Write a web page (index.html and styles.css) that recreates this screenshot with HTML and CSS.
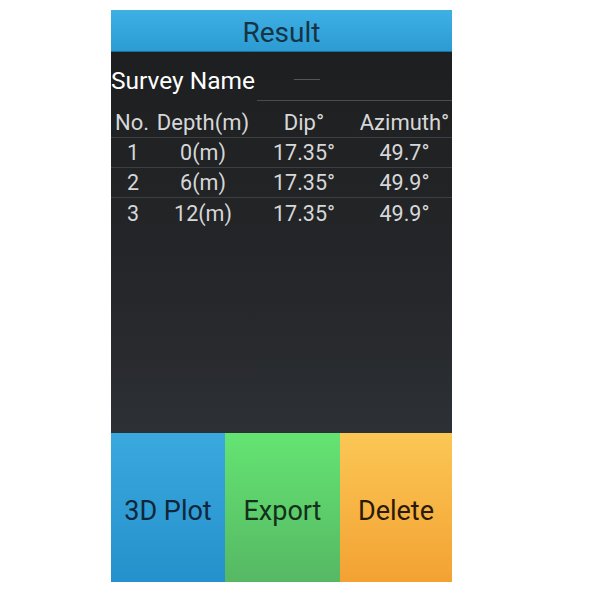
FILE: index.html
```html
<!DOCTYPE html>
<html>
<head>
<meta charset="utf-8">
<link rel="stylesheet" href="styles.css">
</head>
<body>
<div class="page">
  <div class="phone">
    <div class="titlebar">Result</div>
    <div class="content">
      <div class="name-row">
        <span class="name-label">Survey Name</span>
        <div class="name-field"><span class="hint-dash"></span></div>
      </div>
      <div class="table">
        <div class="row head">
          <span>No.</span><span>Depth(m)</span><span>Dip°</span><span>Azimuth°</span>
        </div>
        <div class="row">
          <span>1</span><span>0(m)</span><span>17.35°</span><span>49.7°</span>
        </div>
        <div class="row">
          <span>2</span><span>6(m)</span><span>17.35°</span><span>49.9°</span>
        </div>
        <div class="row">
          <span>3</span><span>12(m)</span><span>17.35°</span><span>49.9°</span>
        </div>
      </div>
    </div>
    <div class="buttons">
      <div class="btn plot">3D Plot</div>
      <div class="btn export">Export</div>
      <div class="btn delete">Delete</div>
    </div>
  </div>
</div>
</body>
</html>
```
FILE: styles.css
```css
html, body {
  margin: 0;
  padding: 0;
  background: #ffffff;
}
body {
  font-family: Roboto, "Noto Sans", sans-serif;
}
.page {
  width: 600px;
  height: 600px;
  display: flex;
  justify-content: flex-start;
  padding-left: 111px;
  padding-top: 10px;
  box-sizing: border-box;
}
.phone {
  width: 341px;
  height: 572px;
  display: flex;
  flex-direction: column;
  background: linear-gradient(#1c1d1e, #25272a 50%, #363a40);
}
.titlebar {
  height: 42px;
  flex: none;
  background: linear-gradient(#3fb0e4, #2b9bd3);
  border-bottom: 1px solid #1d6f97;
  box-sizing: border-box;
  color: #163446;
  font-size: 28px;
  display: flex;
  align-items: center;
  justify-content: center;
  padding-top: 3px;
}
.content {
  flex: 1;
  display: flex;
  flex-direction: column;
}
.name-row {
  height: 55px;
  display: flex;
  align-items: stretch;
}
.name-label {
  color: #ffffff;
  font-size: 24.5px;
  padding-top: 14px;
  width: 146px;
  white-space: nowrap;
}
.name-field {
  flex: 1;
  border-bottom: 1px solid #4a4c4f;
  margin-bottom: 6px;
  position: relative;
}
.hint-dash {
  position: absolute;
  left: 37px;
  top: 27px;
  width: 26px;
  height: 1px;
  background: #55585b;
}
.table {
  display: flex;
  flex-direction: column;
}
.row {
  display: grid;
  grid-template-columns: 44px 96px 106px 95px;
  height: 30px;
  align-items: center;
  border-bottom: 1px solid #3d3f42;
  box-sizing: border-box;
  color: #d6d7d8;
  font-size: 21.5px;
}
.row.head {
  height: 31px;
  font-size: 22px;
}
.row:last-child {
  border-bottom: none;
}
.row span {
  text-align: center;
  white-space: nowrap;
}
.row.head span:first-child {
  text-align: left;
  padding-left: 4px;
}
.buttons {
  height: 149px;
  flex: none;
  display: grid;
  grid-template-columns: 114px 115px 112px;
}
.btn {
  display: flex;
  align-items: center;
  justify-content: center;
  font-size: 27px;
  padding-top: 6px;
  box-sizing: border-box;
}
.plot {
  background: linear-gradient(#3aa9de, #2591cc);
  color: #10263a;
}
.export {
  background: linear-gradient(#64e472, #56b864);
  color: #13301a;
}
.delete {
  background: linear-gradient(#fbc755, #f3a232);
  color: #2a1a08;
}
```
